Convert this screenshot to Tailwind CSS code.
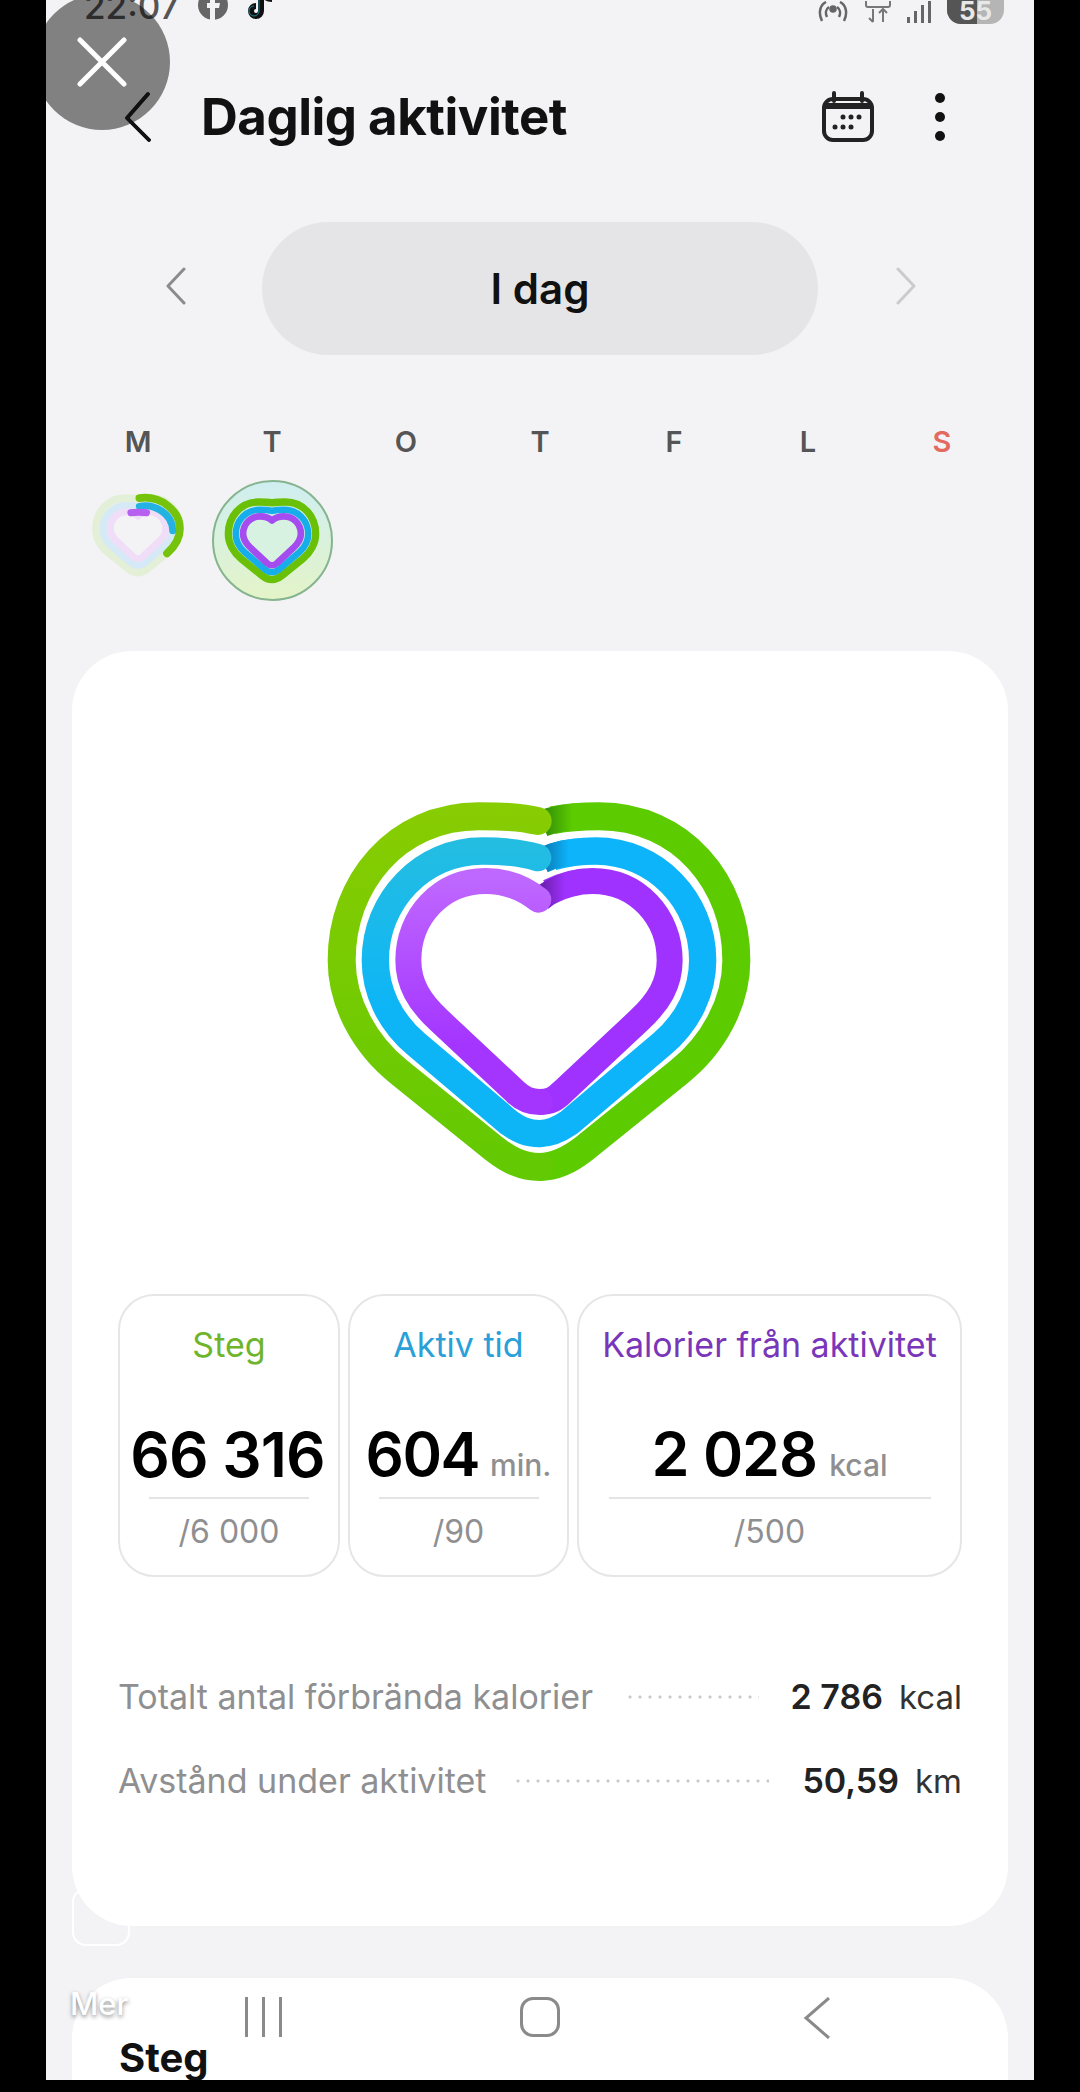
<!DOCTYPE html>
<html lang="sv">
<head>
<meta charset="utf-8">
<script src="https://cdn.jsdelivr.net/npm/@tailwindcss/browser@4"></script>
</head>
<body class="bg-black">
<div class="relative w-[1080px] h-[2092px] bg-black overflow-hidden font-['Inter','Roboto',sans-serif]">
  <div class="relative ml-[46px] w-[988px] h-[2080px] bg-[#f3f3f5] overflow-hidden">

    <!-- status bar -->
    <div class="flex items-end justify-between h-[24px] pl-[38px] pr-[30px] overflow-hidden">
      <div class="flex items-center gap-[18px]">
        <span class="text-[35px] leading-[36px] font-medium text-[#555]">22:07</span>
        <svg width="30" height="30" viewBox="0 0 30 30" class="mb-[2px]"><circle cx="15" cy="15" r="15" fill="#666"/><path d="M17 30V18h4l1-5h-5v-3c0-2 1-3 3-3h2V3h-4c-4 0-6 3-6 6v4H9v5h3v12z" fill="#f3f3f5"/></svg>
        <svg width="30" height="32" viewBox="0 0 30 32"><path d="M15 0v21a5 5 0 1 1-5-5M15 0c1 5 5 9 11 9" fill="none" stroke="#111" stroke-width="6"/><path d="M13 0v21a5 5 0 1 1-5-5" fill="none" stroke="#22d3ee" stroke-width="1" opacity=".6"/></svg>
      </div>
      <div class="flex items-center gap-[14px]">
        <svg width="32" height="22" viewBox="0 0 32 22" fill="none" stroke="#666" stroke-width="2.5"><path d="M5 20C1 12 3 4 9 1M27 20c4-8 2-16-4-19M10 16c-2-4-1-8 2-10M22 16c2-4 1-8-2-10"/><circle cx="16" cy="8" r="2.5" fill="#666"/></svg>
        <svg width="30" height="22" viewBox="0 0 30 22" fill="none" stroke="#777" stroke-width="2"><rect x="3" y="-6" width="24" height="12" rx="2"/><path d="M10 8v13M6 17l4 4M20 21V8M16 12l4-4 4 4"/></svg>
        <svg width="26" height="22" viewBox="0 0 26 22" fill="#666"><rect x="0" y="16" width="3" height="6"/><rect x="7" y="10" width="3" height="12"/><rect x="14" y="4" width="3" height="18"/><rect x="21" y="0" width="3" height="22"/></svg>
        <div class="relative w-[57px] h-[24px] rounded-b-[14px] bg-[#b5b5b5] overflow-hidden flex items-end justify-center">
          <div class="absolute left-0 top-0 w-[30px] h-full bg-[#555]"></div>
          <span class="relative text-[26px] leading-[26px] font-bold text-[#e8e8e8]">55</span>
        </div>
      </div>
    </div>

    <!-- header -->
    <div class="flex items-center h-[64px] mt-[61px] pr-[89px]">
      <svg width="30" height="50" viewBox="0 0 30 50" class="ml-[77px]" fill="none" stroke="#111" stroke-width="3.5" stroke-linecap="round" stroke-linejoin="round"><path d="M25 2 4 26l22 22"/></svg>
      <h1 class="ml-[48px] text-[51px] leading-[64px] font-bold text-[#111] tracking-[-0.5px] whitespace-nowrap">Daglig aktivitet</h1>
      <svg width="54" height="52" viewBox="0 0 54 52" class="ml-auto" fill="none">
        <rect x="3" y="8" width="48" height="41" rx="9" stroke="#222" stroke-width="4"/>
        <path d="M13 2v8M41 2v8" stroke="#222" stroke-width="4" stroke-linecap="round"/>
        <path d="M3 15h48" stroke="#222" stroke-width="6"/>
        <g fill="#222"><circle cx="22" cy="26" r="2.5"/><circle cx="30" cy="26" r="2.5"/><circle cx="38" cy="26" r="2.5"/><circle cx="14" cy="36" r="2.5"/><circle cx="22" cy="36" r="2.5"/><circle cx="30" cy="36" r="2.5"/></g>
      </svg>
      <div class="ml-[60px] flex flex-col gap-[9px]">
        <span class="block w-[10px] h-[10px] rounded-full bg-[#111]"></span>
        <span class="block w-[10px] h-[10px] rounded-full bg-[#111]"></span>
        <span class="block w-[10px] h-[10px] rounded-full bg-[#111]"></span>
      </div>
    </div>

    <!-- day pager -->
    <div class="flex items-center h-[133px] mt-[73px]">
      <svg width="24" height="38" viewBox="0 0 24 38" class="ml-[118px] mt-[-6px]" fill="none" stroke="#8b8b8d" stroke-width="3" stroke-linecap="round" stroke-linejoin="round"><path d="M20 2 4 19l16 17"/></svg>
      <div class="ml-[74px] w-[556px] h-[133px] rounded-full bg-[#e5e5e7] flex items-center justify-center text-[42px] font-semibold text-[#111]">I dag</div>
      <svg width="24" height="38" viewBox="0 0 24 38" class="ml-[76px] mt-[-6px]" fill="none" stroke="#cbcbcd" stroke-width="3" stroke-linecap="round" stroke-linejoin="round"><path d="M4 2l16 17L4 36"/></svg>
    </div>

    <!-- week -->
    <div class="grid grid-cols-7 mx-[25px] mt-[71px] text-center text-[29px] leading-[32px] font-semibold text-[#555]">
      <span>M</span><span>T</span><span>O</span><span>T</span><span>F</span><span>L</span><span class="text-[#e4695f]">S</span>
    </div>

    <div class="grid grid-cols-7 mx-[25px] h-[125px] mt-[22px]">
      <div class="flex justify-center pt-[13px]">
        <svg width="92" height="84" viewBox="70 50 1300 1180" fill="none" stroke-linecap="round">
          <path d="M720 130C660 118 600 118 540 118C290 118 128 320 128 550C128 680 200 805 300 885L585 1115C630 1150 670 1170 720 1170C770 1170 810 1150 855 1115L1140 885C1240 805 1312 680 1312 550C1312 320 1150 118 900 118C840 118 780 118 720 130Z" stroke="#e3efd6" stroke-width="110"/>
          <path d="M720 240C660 222 610 222 550 222C370 222 229 370 229 550C229 640 270 732 350 800L630 1037C660 1058 685 1070 720 1070C755 1070 780 1058 810 1037L1090 800C1170 732 1211 640 1211 550C1211 370 1070 222 890 222C830 222 780 222 720 240Z" stroke="#d5e9f7" stroke-width="100"/>
          <path d="M720 368C670 325 620 312 560 312C425 312 328 420 328 550C328 620 360 674 420 730L650 945C690 985 750 985 790 945L1020 730C1080 674 1112 620 1112 550C1112 420 1015 312 880 312C820 312 770 325 720 368Z" stroke="#f0def8" stroke-width="100"/>
          <path d="M740 118C1050 80 1312 300 1312 550C1312 690 1250 790 1130 900" stroke="#75c30a" stroke-width="110"/>
          <path d="M740 235C950 190 1211 340 1211 580" stroke="#23b2e2" stroke-width="100"/>
          <path d="M620 325C660 315 800 315 840 325" stroke="#b65ff0" stroke-width="100"/>
        </svg>
      </div>
      <div class="flex justify-center items-start">
        <div class="w-[121px] h-[121px] rounded-full border-2 border-[#86b48f] bg-gradient-to-b from-[#cfeef0] to-[#e4f4c8] flex items-center justify-center">
          <svg width="96" height="87" viewBox="70 50 1300 1180" fill="none" stroke-linejoin="round">
            <path d="M720 368C670 325 620 312 560 312C425 312 328 420 328 550C328 620 360 674 420 730L650 945C690 985 750 985 790 945L1020 730C1080 674 1112 620 1112 550C1112 420 1015 312 880 312C820 312 770 325 720 368Z" fill="#d8f2e2"/>
            <path d="M720 130C660 118 600 118 540 118C290 118 128 320 128 550C128 680 200 805 300 885L585 1115C630 1150 670 1170 720 1170C770 1170 810 1150 855 1115L1140 885C1240 805 1312 680 1312 550C1312 320 1150 118 900 118C840 118 780 118 720 130Z" stroke="#69c006" stroke-width="100"/>
            <path d="M720 240C660 222 610 222 550 222C370 222 229 370 229 550C229 640 270 732 350 800L630 1037C660 1058 685 1070 720 1070C755 1070 780 1058 810 1037L1090 800C1170 732 1211 640 1211 550C1211 370 1070 222 890 222C830 222 780 222 720 240Z" stroke="#16aeea" stroke-width="88"/>
            <path d="M720 368C670 325 620 312 560 312C425 312 328 420 328 550C328 620 360 674 420 730L650 945C690 985 750 985 790 945L1020 730C1080 674 1112 620 1112 550C1112 420 1015 312 880 312C820 312 770 325 720 368Z" stroke="#a44cf0" stroke-width="90"/>
          </svg>
        </div>
      </div>
    </div>

    <!-- main card -->
    <div class="mx-[26px] mt-[46px] h-[1275px] rounded-[60px] bg-white px-[46px]">
      <div class="flex justify-center pt-[149px] h-[643px] ml-[-3px]">
        <svg width="480" height="420" viewBox="0 0 1440 1260" fill="none" class="mt-[-23px]">
          <defs>
            <linearGradient id="gl" gradientUnits="userSpaceOnUse" x1="0" y1="100" x2="0" y2="1200"><stop offset="0" stop-color="#88cc02"/><stop offset="1" stop-color="#62c902"/></linearGradient>
            <linearGradient id="gs" gradientUnits="userSpaceOnUse" x1="730" y1="0" x2="820" y2="0"><stop offset="0" stop-color="#2f8a06"/><stop offset="1" stop-color="#5ccb00"/></linearGradient>
            <linearGradient id="bl" gradientUnits="userSpaceOnUse" x1="0" y1="200" x2="0" y2="700"><stop offset="0" stop-color="#24bde2"/><stop offset="1" stop-color="#0db5f6"/></linearGradient>
            <linearGradient id="bs" gradientUnits="userSpaceOnUse" x1="730" y1="0" x2="810" y2="0"><stop offset="0" stop-color="#0b78b4"/><stop offset="1" stop-color="#0db4fa"/></linearGradient>
            <linearGradient id="pl" gradientUnits="userSpaceOnUse" x1="0" y1="300" x2="0" y2="800"><stop offset="0" stop-color="#bf68ff"/><stop offset="1" stop-color="#a435ff"/></linearGradient>
            <linearGradient id="ps" gradientUnits="userSpaceOnUse" x1="730" y1="0" x2="800" y2="0"><stop offset="0" stop-color="#6d1fb0"/><stop offset="1" stop-color="#a032ff"/></linearGradient>
          </defs>
          <!-- green -->
          <path d="M720 1170C770 1170 810 1150 855 1115L1140 885C1240 805 1312 680 1312 550C1312 320 1150 118 900 118C850 118 800 122 760 130" stroke="#5ccb00" stroke-width="84"/>
          <path d="M730 140C770 124 820 118 870 118" stroke="url(#gs)" stroke-width="80"/>
          <path d="M722 1170C670 1170 630 1150 585 1115L300 885C200 805 128 680 128 550C128 320 290 118 540 118C600 118 660 118 716 132" stroke="url(#gl)" stroke-width="84" stroke-linecap="round"/>
          <!-- blue -->
          <path d="M720 1070C755 1070 780 1058 810 1037L1090 800C1170 732 1211 640 1211 550C1211 370 1070 222 890 222C840 222 800 228 760 240" stroke="#0db4fa" stroke-width="82"/>
          <path d="M730 250C770 232 810 222 860 222" stroke="url(#bs)" stroke-width="78"/>
          <path d="M722 1070C685 1070 660 1058 630 1037L350 800C270 732 229 640 229 550C229 370 370 222 550 222C610 222 660 225 716 242" stroke="url(#bl)" stroke-width="82" stroke-linecap="round"/>
          <!-- purple -->
          <path d="M720 975C755 975 770 965 790 945L1020 730C1080 674 1112 620 1112 550C1112 420 1015 312 880 312C830 312 790 325 750 345" stroke="#a032ff" stroke-width="78"/>
          <path d="M725 366C770 330 810 316 860 312" stroke="url(#ps)" stroke-width="74"/>
          <path d="M722 975C695 975 670 965 650 945L420 730C360 674 328 620 328 550C328 420 425 312 560 312C620 312 670 330 718 368" stroke="url(#pl)" stroke-width="78" stroke-linecap="round"/>
        </svg>
      </div>

      <div class="grid grid-cols-[222px_221px_385px] gap-[8px] h-[283px] text-center">
        <div class="rounded-[36px] border-2 border-[#e6e6e8] flex flex-col items-center pt-[27px]">
          <span class="text-[34px] leading-[44px] text-[#6fb52c]">Steg</span>
          <div class="mt-[51px] h-[72px] mr-[3px] flex items-center whitespace-nowrap text-[62px] font-semibold text-black tracking-[-1px]">66 316</div>
          <div class="w-[160px] h-[2px] bg-[#e4e4e6] mt-[7px]"></div>
          <span class="mt-[11px] text-[32px] leading-[44px] text-[#8f8f91]">/6 000</span>
        </div>
        <div class="rounded-[36px] border-2 border-[#e6e6e8] flex flex-col items-center pt-[27px]">
          <span class="text-[34px] leading-[44px] text-[#2a9fd8]">Aktiv tid</span>
          <div class="mt-[51px] h-[72px] flex items-baseline justify-center whitespace-nowrap"><span class="text-[60px] leading-[72px] font-semibold text-black tracking-[-1.5px]">604</span><span class="ml-[11px] text-[30px] font-medium text-[#8f8f91]">min.</span></div>
          <div class="w-[160px] h-[2px] bg-[#e4e4e6] mt-[7px]"></div>
          <span class="mt-[11px] text-[32px] leading-[44px] text-[#8f8f91]">/90</span>
        </div>
        <div class="rounded-[36px] border-2 border-[#e6e6e8] flex flex-col items-center pt-[27px]">
          <span class="text-[34px] leading-[44px] text-[#7a36b8] whitespace-nowrap">Kalorier från aktivitet</span>
          <div class="mt-[51px] h-[72px] flex items-baseline justify-center whitespace-nowrap"><span class="text-[61px] leading-[72px] font-semibold text-black tracking-[-1px]">2 028</span><span class="ml-[12px] text-[30px] font-medium text-[#8f8f91]">kcal</span></div>
          <div class="w-[322px] h-[2px] bg-[#e4e4e6] mt-[7px]"></div>
          <span class="mt-[11px] text-[32px] leading-[44px] text-[#8f8f91]">/500</span>
        </div>
      </div>

      <div class="mt-[98px] flex items-center h-[44px] text-[34px] leading-[44px]">
        <span class="text-[#8f8f91] whitespace-nowrap">Totalt antal förbrända kalorier</span>
        <span class="flex-1 ml-[32px] mr-[32px] h-[4px] bg-[radial-gradient(circle,#c8c8ca_1.3px,transparent_1.8px)] bg-[length:10px_4px]"></span>
        <span class="font-semibold text-[#222] whitespace-nowrap">2 786</span>
        <span class="ml-[16px] text-[#333] text-[33px] whitespace-nowrap">kcal</span>
      </div>
      <div class="mt-[40px] flex items-center h-[44px] text-[34px] leading-[44px]">
        <span class="text-[#8f8f91] whitespace-nowrap">Avstånd under aktivitet</span>
        <span class="flex-1 ml-[27px] mr-[33px] h-[4px] bg-[radial-gradient(circle,#c8c8ca_1.3px,transparent_1.8px)] bg-[length:10px_4px]"></span>
        <span class="font-semibold text-[#222] whitespace-nowrap">50,59</span>
        <span class="ml-[16px] text-[#333] text-[33px] whitespace-nowrap">km</span>
      </div>
    </div>

    <!-- second card -->
    <div class="mx-[26px] mt-[52px] h-[200px] rounded-t-[60px] bg-white pl-[47px] pt-[58px]">
      <h2 class="text-[40px] leading-[44px] font-bold text-[#111]">Steg</h2>
    </div>

    <!-- floating overlays -->
    <div class="absolute left-[-12px] top-[-6px] w-[136px] h-[136px] rounded-full bg-black/47 flex items-center justify-center">
      <svg width="50" height="50" viewBox="0 0 50 50" fill="none" stroke="#fff" stroke-width="5" stroke-linecap="round"><path d="M3 3l44 44M47 3 3 47"/></svg>
    </div>
    <svg width="30" height="50" viewBox="0 0 30 50" class="absolute left-[77px] top-[92px]" fill="none" stroke="#111" stroke-width="3.5" stroke-linecap="round" stroke-linejoin="round"><path d="M25 2 4 26l22 22"/></svg>

    <div class="absolute left-[26px] top-[1888px] w-[58px] h-[58px] rounded-[14px] border-2 border-white"></div>
    <span class="absolute left-[24px] top-[1987px] text-[31px] leading-[34px] font-medium text-white [text-shadow:0_2px_4px_rgba(0,0,0,0.45)]">Mer</span>

    <div class="absolute left-0 top-[1997px] w-full h-[40px]">
      <div class="absolute left-[199px] top-0 flex gap-[14px]">
        <span class="block w-[3px] h-[40px] bg-[#8a8a8a]"></span>
        <span class="block w-[3px] h-[40px] bg-[#8a8a8a]"></span>
        <span class="block w-[3px] h-[40px] bg-[#8a8a8a]"></span>
      </div>
      <div class="absolute left-[474px] top-0 w-[40px] h-[40px] rounded-[13px] border-[3px] border-[#8a8a8a]"></div>
      <svg width="28" height="42" viewBox="0 0 28 42" class="absolute left-[757px] top-0" fill="none" stroke="#8a8a8a" stroke-width="3"><path d="M26 1 3 21l23 20"/></svg>
    </div>
  </div>
</div>
</body>
</html>
